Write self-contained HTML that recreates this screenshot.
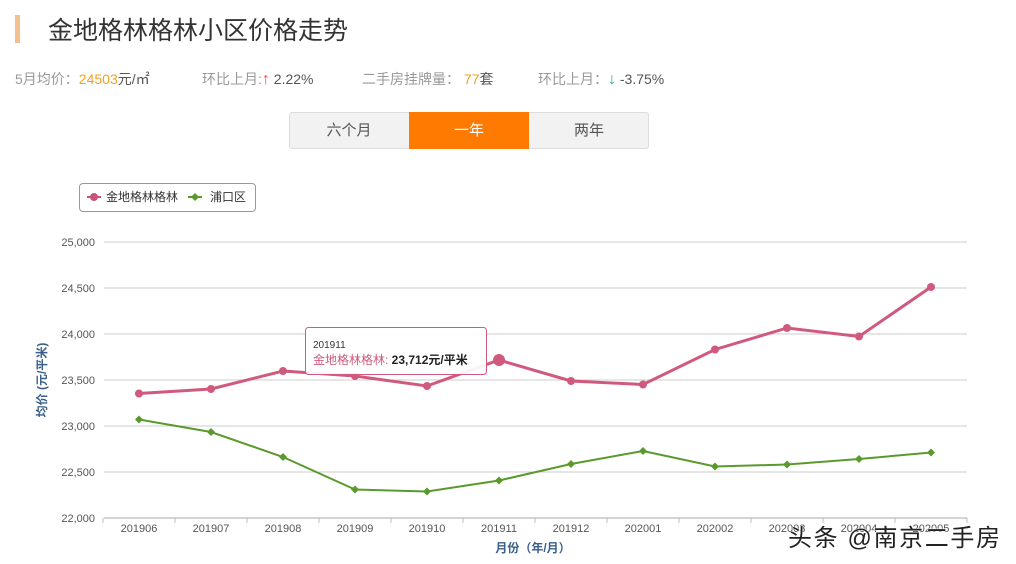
<!DOCTYPE html>
<html><head><meta charset="utf-8"><style>
body{margin:0;width:1016px;height:564px;background:#fff;font-family:"Liberation Sans","Noto Sans CJK SC",sans-serif;position:relative;overflow:hidden}
.a{position:absolute}
</style></head><body>
<div class="a" style="left:15px;top:15px;width:5px;height:28px;background:#f3c08e"></div>
<div class="a" style="left:48px;top:11px;font-size:25px;color:#333">金地格林格林小区价格走势</div>
<div class="a" style="left:15px;top:69px;font-size:14px;color:#999;white-space:nowrap">5月均价：<span style="color:#f5a021">24503</span><span style="color:#555">元/㎡</span></div>
<div class="a" style="left:202px;top:69px;font-size:14px;color:#999;white-space:nowrap">环比上月:<span style="color:#e44;font-size:16px">↑</span><span style="color:#555"> 2.22%</span></div>
<div class="a" style="left:362px;top:69px;font-size:14px;color:#999;white-space:nowrap">二手房挂牌量： <span style="color:#f5a021">77</span><span style="color:#555">套</span></div>
<div class="a" style="left:538px;top:69px;font-size:14px;color:#999;white-space:nowrap">环比上月：<span style="color:#3a9;font-size:16px">↓</span><span style="color:#555"> -3.75%</span></div>
<div class="a" style="left:289px;top:112px;width:358px;height:35px;border:1px solid #ddd;border-radius:3px;background:#f2f2f2"></div>
<div class="a" style="left:289px;top:112px;width:120px;height:37px;line-height:37px;text-align:center;font-size:15px;color:#555">六个月</div>
<div class="a" style="left:409px;top:112px;width:120px;height:37px;line-height:37px;text-align:center;font-size:15px;color:#fff;background:#ff7a00">一年</div>
<div class="a" style="left:529px;top:112px;width:120px;height:37px;line-height:37px;text-align:center;font-size:15px;color:#555">两年</div>
<div class="a" style="left:79px;top:183px;width:175px;height:27px;border:1px solid #999;border-radius:4px"></div>
<svg class="a" style="left:0;top:0" width="1016" height="564">
<g font-family="Liberation Sans,Noto Sans CJK SC,sans-serif">
<line x1="87" y1="197" x2="101" y2="197" stroke="#c8557a" stroke-width="2"/><circle cx="94" cy="197" r="4" fill="#c8557a"/>
<text x="106" y="201" font-size="12" fill="#333">金地格林格林</text>
<line x1="188" y1="197" x2="202" y2="197" stroke="#5a9a2c" stroke-width="2"/><path d="M195 193l4 4-4 4-4-4z" fill="#5a9a2c"/>
<text x="210" y="201" font-size="12" fill="#333">浦口区</text>
<g stroke="#ccc" stroke-width="1">
<line x1="104" y1="242" x2="967" y2="242"/><line x1="104" y1="288" x2="967" y2="288"/><line x1="104" y1="334" x2="967" y2="334"/><line x1="104" y1="380" x2="967" y2="380"/><line x1="104" y1="426" x2="967" y2="426"/><line x1="104" y1="472" x2="967" y2="472"/><line x1="104" y1="518" x2="967" y2="518" stroke="#aaa"/>
<path d="M103 518v5M175 518v5M247 518v5M319 518v5M391 518v5M463 518v5M535 518v5M607 518v5M679 518v5M751 518v5M823 518v5M895 518v5M967 518v5" stroke="#bbb"/>
</g>
<g font-size="11" fill="#555" text-anchor="end">
<text x="95" y="246">25,000</text><text x="95" y="292">24,500</text><text x="95" y="338">24,000</text><text x="95" y="384">23,500</text><text x="95" y="430">23,000</text><text x="95" y="476">22,500</text><text x="95" y="522">22,000</text>
</g>
<g font-size="11" fill="#555" text-anchor="middle">
<text x="139" y="532">201906</text><text x="211" y="532">201907</text><text x="283" y="532">201908</text><text x="355" y="532">201909</text><text x="427" y="532">201910</text><text x="499" y="532">201911</text><text x="571" y="532">201912</text><text x="643" y="532">202001</text><text x="715" y="532">202002</text><text x="787" y="532">202003</text><text x="859" y="532">202004</text><text x="931" y="532">202005</text>
</g>
<text x="533" y="552" font-size="12" fill="#3a5f8a" font-weight="bold" text-anchor="middle">月份（年/月）</text>
<text transform="translate(46 380) rotate(-90)" font-size="12" fill="#3a5f8a" font-weight="bold" text-anchor="middle">均价 (元/平米)</text>
<polyline fill="none" stroke="#5a9a2c" stroke-width="2" points="139,419.5 211,432 283,457 355,489.5 427,491.5 499,480.5 571,464 643,451 715,466.5 787,464.5 859,459 931,452.5"/>
<g fill="#5a9a2c"><path d="M139 415.5l4 4-4 4-4-4zM211 428l4 4-4 4-4-4zM283 453l4 4-4 4-4-4zM355 485.5l4 4-4 4-4-4zM427 487.5l4 4-4 4-4-4zM499 476.5l4 4-4 4-4-4zM571 460l4 4-4 4-4-4zM643 447l4 4-4 4-4-4zM715 462.5l4 4-4 4-4-4zM787 460.5l4 4-4 4-4-4zM859 455l4 4-4 4-4-4zM931 448.5l4 4-4 4-4-4z"/></g>
<polyline fill="none" stroke="#d05a7e" stroke-width="3" points="139,393.5 211,389 283,371 355,376 427,386 499,360 571,381 643,384.5 715,349.5 787,328 859,336.5 931,287"/>
<g fill="#d05a7e"><circle cx="139" cy="393.5" r="4"/><circle cx="211" cy="389" r="4"/><circle cx="283" cy="371" r="4"/><circle cx="355" cy="376" r="4"/><circle cx="427" cy="386" r="4"/><circle cx="499" cy="360" r="6"/><circle cx="571" cy="381" r="4"/><circle cx="643" cy="384.5" r="4"/><circle cx="715" cy="349.5" r="4"/><circle cx="787" cy="328" r="4"/><circle cx="859" cy="336.5" r="4"/><circle cx="931" cy="287" r="4"/></g>
<rect x="305.5" y="327.5" width="181" height="47" rx="3" fill="#fff" fill-opacity="0.92" stroke="#d05a7e"/>
<text x="313" y="348" font-size="10" fill="#333">201911</text>
<text x="313" y="364" font-size="12" fill="#d05a7e">金地格林格林: <tspan fill="#222" font-weight="bold">23,712元/平米</tspan></text>
<text x="788" y="546" font-size="24" fill="#222" stroke="#fff" stroke-width="0.8" paint-order="stroke" textLength="212">头条 @南京二手房</text>
</g>
</svg>
</body></html>
